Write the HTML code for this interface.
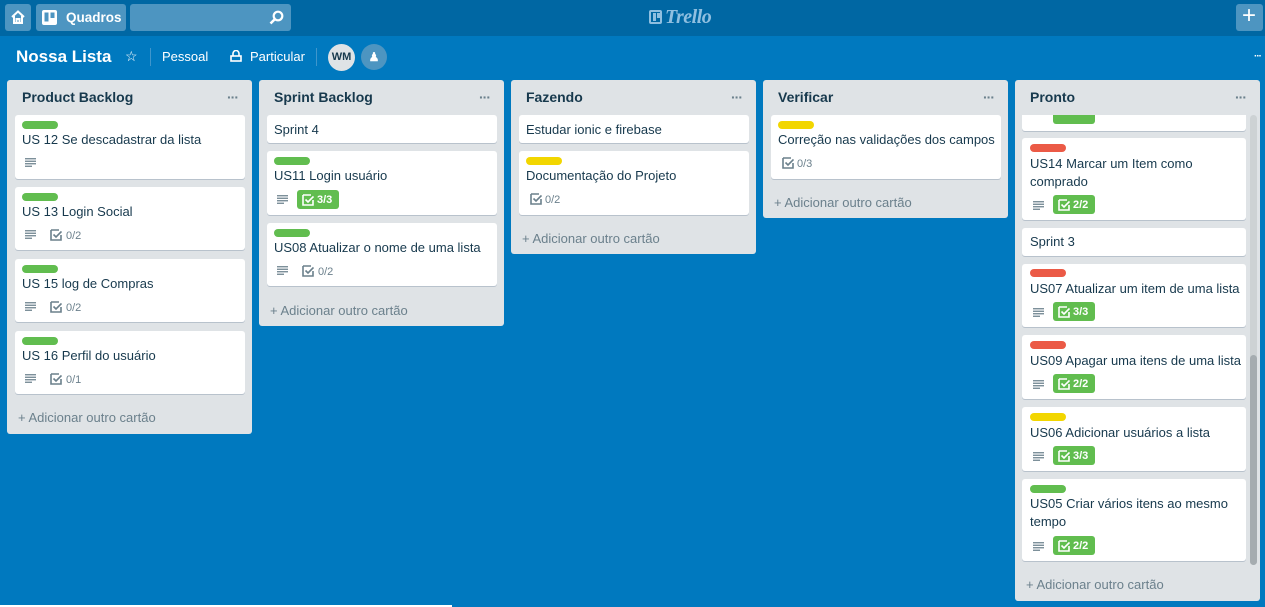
<!DOCTYPE html>
<html><head><meta charset="utf-8"><style>
*{margin:0;padding:0;box-sizing:border-box}
body{width:1265px;height:607px;overflow:hidden;background:#0079bf;font-family:"Liberation Sans",Arial,sans-serif;position:relative}
.a{position:absolute}
.top{left:0;top:0;width:1265px;height:36px;background:#0067a3}
.btn{position:absolute;background:#4d95c1;border-radius:3px;top:4px;height:27px}
.l{position:absolute;background:#dfe3e6;border-radius:3px;width:245px}
.h{position:absolute;font-weight:bold;font-size:14px;color:#17394d}
.dots{position:absolute;color:#6b808c;font-size:14px;letter-spacing:-1px;font-weight:bold}
.c{position:absolute;background:#fff;border-radius:3px;box-shadow:0 1px 0 #b8c2cc}
.lb{position:absolute;height:8px;width:36px;border-radius:4px}
.g{background:#61bd4f}.r{background:#eb5a46}.y{background:#f2d600}
.t{position:absolute;font-size:13px;color:#17394d;line-height:18px;white-space:nowrap;margin-top:1px}
.ad{position:absolute;font-size:13px;color:#6b808c;white-space:nowrap;margin-top:1px}
.ck{position:absolute;font-size:11px;color:#6b808c}
.gb{position:absolute;background:#61bd4f;border-radius:3px;width:42px;height:19px;color:#fff;font-size:11px;font-weight:bold}
.gb svg{position:absolute;left:5px;top:4px}
.gb span{position:absolute;left:20px;top:4px}
</style></head><body>
<svg width="0" height="0" style="position:absolute"><defs>
<symbol id="ds" viewBox="0 0 11 9"><path d="M0 .75H11M0 3.25H11M0 5.75H11M0 8.25H7" stroke="#6b808c" stroke-width="1.3"/></symbol>
<symbol id="cb" viewBox="0 0 12 12"><path d="M1 1H9M1 1V11H11V6M3.5 5.5L6 8L11.5 2.5" fill="none" stroke="currentColor" stroke-width="1.6"/></symbol>
</defs></svg>

<div class="a top"></div>
<div class="btn" style="left:5px;width:26px"><svg class="a" style="left:6px;top:6px" width="14" height="14" viewBox="0 0 14 14"><path d="M1 7L7 1.5L13 7M3 6V13H11V6M5.5 13V9H8.5V13" fill="none" stroke="#fff" stroke-width="2"/></svg></div>
<div class="btn" style="left:36px;width:90px"><svg class="a" style="left:6px;top:6px" width="15" height="15" viewBox="0 0 15 15"><rect x="0" y="0" width="15" height="15" rx="2" fill="#fff"/><rect x="2.5" y="2.5" width="4" height="9" fill="#4d95c1"/><rect x="8.5" y="2.5" width="4" height="5.5" fill="#4d95c1"/></svg><span class="a" style="left:30px;top:6px;color:#fff;font-weight:bold;font-size:13.5px">Quadros</span></div>
<div class="btn" style="left:130px;width:161px"><svg class="a" style="left:139px;top:6px" width="15" height="15" viewBox="0 0 15 15"><circle cx="9" cy="6" r="4.3" fill="none" stroke="#fff" stroke-width="2.2"/><path d="M6 9L1.5 13.5" stroke="#fff" stroke-width="2.6"/></svg></div>
<div class="a" style="left:649px;top:10px;width:13px;height:14px;border:2px solid #8fbfe0;border-radius:2px"><div class="a" style="left:2px;top:1px;width:3px;height:8px;background:#8fbfe0"></div><div class="a" style="left:6px;top:1px;width:3px;height:5px;background:#8fbfe0"></div></div>
<div class="a" style="left:665px;top:6px;color:#8fbfe0;font-size:20px;font-style:italic;font-weight:bold;font-family:'Liberation Serif',serif;letter-spacing:-0.5px">Trello</div>
<div class="btn" style="left:1236px;width:27px;top:4px;height:27px"><span class="a" style="left:6px;top:-2px;color:#fff;font-size:24px">+</span></div>

<div class="a" style="left:16px;top:47px;color:#fff;font-weight:bold;font-size:17px">Nossa Lista</div>
<span class="a" style="left:125px;top:48px;color:#fff;font-size:14px">☆</span>
<div class="a" style="left:150px;top:48px;width:1px;height:18px;background:#3f96cc"></div>
<div class="a" style="left:162px;top:49px;color:#fff;font-size:13px">Pessoal</div>
<svg class="a" style="left:230px;top:50px" width="12" height="12" viewBox="0 0 12 12"><path d="M3 6V3.5A3 3 0 0 1 9 3.5V6" fill="none" stroke="#fff" stroke-width="1.6"/><rect x="1" y="6" width="10" height="5" fill="none" stroke="#fff" stroke-width="1.6"/></svg>
<div class="a" style="left:250px;top:49px;color:#fff;font-size:13px">Particular</div>
<div class="a" style="left:316px;top:48px;width:1px;height:18px;background:#3f96cc"></div>
<div class="a" style="left:328px;top:44px;width:27px;height:27px;border-radius:50%;background:#dfe3e6;color:#17394d;font-weight:bold;font-size:11px;text-align:center;line-height:27px">WM</div>
<div class="a" style="left:361px;top:44px;width:26px;height:26px;border-radius:50%;background:#4d95c1;color:#fff;font-size:12px;text-align:center;line-height:26px;font-weight:bold">&#9823;</div>
<div class="a" style="left:1254px;top:51px;color:#fff;font-size:10px;font-weight:bold;letter-spacing:-1px">···</div>

<!-- List 1 -->
<div class="l" style="left:7px;top:80px;height:354px"></div>
<div class="h" style="left:22px;top:89px">Product Backlog</div><div class="dots" style="left:227px;top:89px">···</div>
<div class="c" style="left:15px;top:115px;width:230px;height:64px"></div>
<div class="lb g" style="left:22px;top:121px"></div><div class="t" style="left:22px;top:130px">US 12 Se descadastrar da lista</div>
<svg class="a" style="left:25px;top:158px" width="11" height="9"><use href="#ds"/></svg>
<div class="c" style="left:15px;top:187px;width:230px;height:63px"></div>
<div class="lb g" style="left:22px;top:193px"></div><div class="t" style="left:22px;top:202px">US 13 Login Social</div>
<svg class="a" style="left:25px;top:230px" width="11" height="9"><use href="#ds"/></svg>
<svg class="a" style="left:50px;top:229px;color:#6b808c" width="12" height="12"><use href="#cb"/></svg><span class="ck" style="left:66px;top:230px">0/2</span>
<div class="c" style="left:15px;top:259px;width:230px;height:63px"></div>
<div class="lb g" style="left:22px;top:265px"></div><div class="t" style="left:22px;top:274px">US 15 log de Compras</div>
<svg class="a" style="left:25px;top:302px" width="11" height="9"><use href="#ds"/></svg>
<svg class="a" style="left:50px;top:301px;color:#6b808c" width="12" height="12"><use href="#cb"/></svg><span class="ck" style="left:66px;top:302px">0/2</span>
<div class="c" style="left:15px;top:331px;width:230px;height:63px"></div>
<div class="lb g" style="left:22px;top:337px"></div><div class="t" style="left:22px;top:346px">US 16 Perfil do usuário</div>
<svg class="a" style="left:25px;top:374px" width="11" height="9"><use href="#ds"/></svg>
<svg class="a" style="left:50px;top:373px;color:#6b808c" width="12" height="12"><use href="#cb"/></svg><span class="ck" style="left:66px;top:374px">0/1</span>
<div class="ad" style="left:18px;top:409px">+ Adicionar outro cartão</div>

<!-- List 2 -->
<div class="l" style="left:259px;top:80px;height:246px"></div>
<div class="h" style="left:274px;top:89px">Sprint Backlog</div><div class="dots" style="left:479px;top:89px">···</div>
<div class="c" style="left:267px;top:115px;width:230px;height:28px"></div>
<div class="t" style="left:274px;top:120px">Sprint 4</div>
<div class="c" style="left:267px;top:151px;width:230px;height:64px"></div>
<div class="lb g" style="left:274px;top:157px"></div><div class="t" style="left:274px;top:166px">US11 Login usuário</div>
<svg class="a" style="left:277px;top:195px" width="11" height="9"><use href="#ds"/></svg>
<div class="gb" style="left:297px;top:190px"><svg width="12" height="12" style="color:#fff"><use href="#cb"/></svg><span>3/3</span></div>
<div class="c" style="left:267px;top:223px;width:230px;height:63px"></div>
<div class="lb g" style="left:274px;top:229px"></div><div class="t" style="left:274px;top:238px">US08 Atualizar o nome de uma lista</div>
<svg class="a" style="left:277px;top:266px" width="11" height="9"><use href="#ds"/></svg>
<svg class="a" style="left:302px;top:265px;color:#6b808c" width="12" height="12"><use href="#cb"/></svg><span class="ck" style="left:318px;top:266px">0/2</span>
<div class="ad" style="left:270px;top:302px">+ Adicionar outro cartão</div>

<!-- List 3 -->
<div class="l" style="left:511px;top:80px;height:174px"></div>
<div class="h" style="left:526px;top:89px">Fazendo</div><div class="dots" style="left:731px;top:89px">···</div>
<div class="c" style="left:519px;top:115px;width:230px;height:28px"></div>
<div class="t" style="left:526px;top:120px">Estudar ionic e firebase</div>
<div class="c" style="left:519px;top:151px;width:230px;height:64px"></div>
<div class="lb y" style="left:526px;top:157px"></div><div class="t" style="left:526px;top:166px">Documentação do Projeto</div>
<svg class="a" style="left:530px;top:193px;color:#6b808c" width="12" height="12"><use href="#cb"/></svg><span class="ck" style="left:545px;top:194px">0/2</span>
<div class="ad" style="left:522px;top:230px">+ Adicionar outro cartão</div>

<!-- List 4 -->
<div class="l" style="left:763px;top:80px;height:138px"></div>
<div class="h" style="left:778px;top:89px">Verificar</div><div class="dots" style="left:983px;top:89px">···</div>
<div class="c" style="left:771px;top:115px;width:230px;height:64px"></div>
<div class="lb y" style="left:778px;top:121px"></div><div class="t" style="left:778px;top:130px">Correção nas validações dos campos</div>
<svg class="a" style="left:782px;top:157px;color:#6b808c" width="12" height="12"><use href="#cb"/></svg><span class="ck" style="left:797px;top:158px">0/3</span>
<div class="ad" style="left:774px;top:194px">+ Adicionar outro cartão</div>

<!-- List 5 -->
<div class="l" style="left:1015px;top:80px;height:521px"></div>
<div class="h" style="left:1030px;top:89px">Pronto</div><div class="dots" style="left:1235px;top:89px">···</div>
<div class="a" style="left:1250px;top:115px;width:7px;height:450px;background:#cdd2d4;border-radius:4px"></div>
<div class="a" style="left:1250px;top:355px;width:7px;height:210px;background:#a5acb0;border-radius:4px"></div>
<div class="c" style="left:1022px;top:115px;width:224px;height:16px;border-radius:0 0 3px 3px"></div>
<div class="gb" style="left:1053px;top:115px;height:9px;border-radius:0 0 3px 3px"></div>
<svg class="a" style="left:1033px;top:115px" width="11" height="4" viewBox="0 5 11 4"><use href="#ds"/></svg>
<div class="c" style="left:1022px;top:138px;width:224px;height:82px"></div>
<div class="lb r" style="left:1030px;top:144px"></div><div class="t" style="left:1030px;top:154px">US14 Marcar um Item como</div><div class="t" style="left:1030px;top:172px">comprado</div>
<svg class="a" style="left:1033px;top:201px" width="11" height="9"><use href="#ds"/></svg>
<div class="gb" style="left:1053px;top:195px"><svg width="12" height="12" style="color:#fff"><use href="#cb"/></svg><span>2/2</span></div>
<div class="c" style="left:1022px;top:228px;width:224px;height:28px"></div>
<div class="t" style="left:1030px;top:232px">Sprint 3</div>
<div class="c" style="left:1022px;top:264px;width:224px;height:63px"></div>
<div class="lb r" style="left:1030px;top:269px"></div><div class="t" style="left:1030px;top:279px">US07 Atualizar um item de uma lista</div>
<svg class="a" style="left:1033px;top:308px" width="11" height="9"><use href="#ds"/></svg>
<div class="gb" style="left:1053px;top:302px"><svg width="12" height="12" style="color:#fff"><use href="#cb"/></svg><span>3/3</span></div>
<div class="c" style="left:1022px;top:335px;width:224px;height:64px"></div>
<div class="lb r" style="left:1030px;top:341px"></div><div class="t" style="left:1030px;top:351px">US09 Apagar uma itens de uma lista</div>
<svg class="a" style="left:1033px;top:380px" width="11" height="9"><use href="#ds"/></svg>
<div class="gb" style="left:1053px;top:374px"><svg width="12" height="12" style="color:#fff"><use href="#cb"/></svg><span>2/2</span></div>
<div class="c" style="left:1022px;top:407px;width:224px;height:64px"></div>
<div class="lb y" style="left:1030px;top:413px"></div><div class="t" style="left:1030px;top:423px">US06 Adicionar usuários a lista</div>
<svg class="a" style="left:1033px;top:452px" width="11" height="9"><use href="#ds"/></svg>
<div class="gb" style="left:1053px;top:446px"><svg width="12" height="12" style="color:#fff"><use href="#cb"/></svg><span>3/3</span></div>
<div class="c" style="left:1022px;top:479px;width:224px;height:82px"></div>
<div class="lb g" style="left:1030px;top:485px"></div><div class="t" style="left:1030px;top:494px">US05 Criar vários itens ao mesmo</div><div class="t" style="left:1030px;top:512px">tempo</div>
<svg class="a" style="left:1033px;top:542px" width="11" height="9"><use href="#ds"/></svg>
<div class="gb" style="left:1053px;top:536px"><svg width="12" height="12" style="color:#fff"><use href="#cb"/></svg><span>2/2</span></div>
<div class="ad" style="left:1026px;top:576px">+ Adicionar outro cartão</div>

<div class="a" style="left:0;top:605px;width:452px;height:2px;background:#fff"></div>
</body></html>
